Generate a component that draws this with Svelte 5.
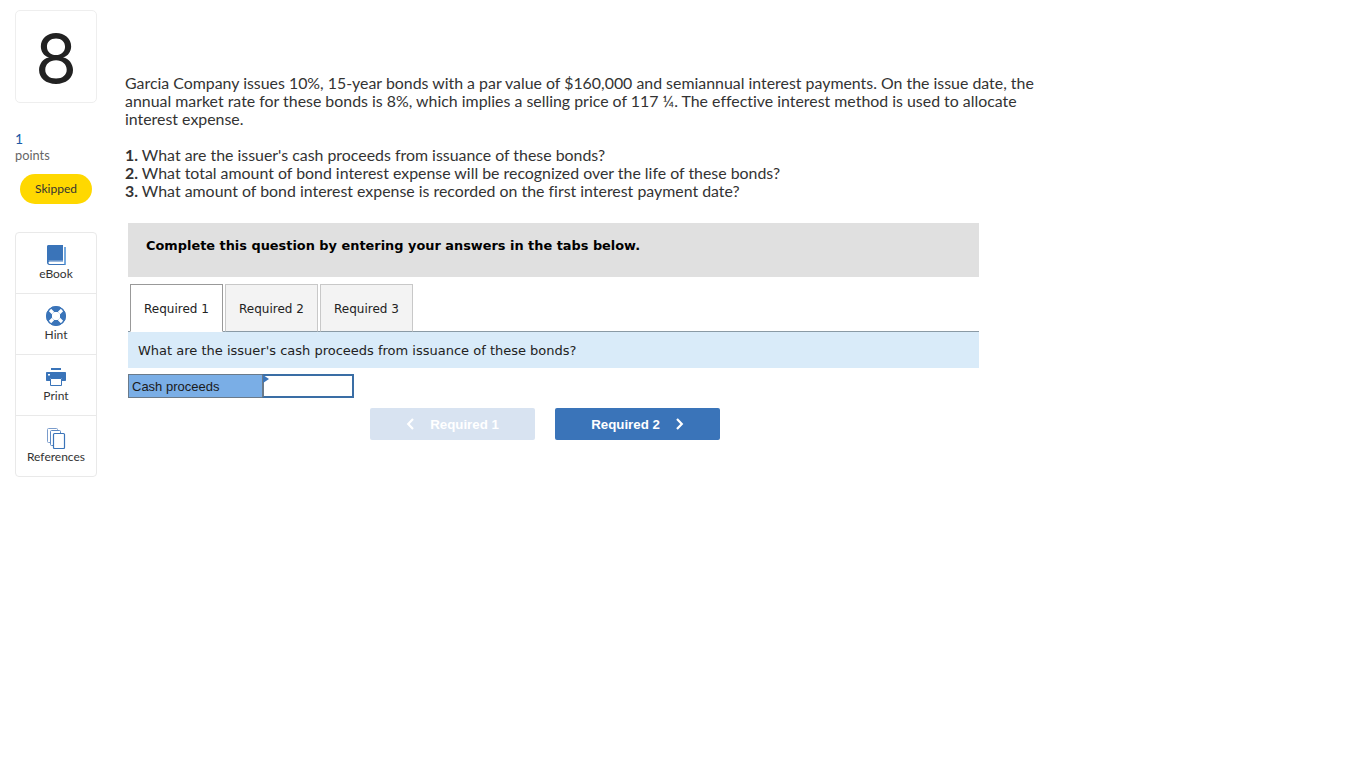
<script>
  const tools = ['eBook', 'Hint', 'Print', 'References'];
  const tabs = ['Required 1', 'Required 2', 'Required 3'];
</script>

<div class="page">
  <aside class="side">
    <div class="number">8</div>
    <div class="points">
      <span class="value">1</span>
      <span class="label">points</span>
    </div>
    <div class="status">Skipped</div>
    <ul class="tools">
      {#each tools as tool}
        <li>
          <svg width="22" height="22" viewBox="0 0 22 22">
            {#if tool === 'eBook'}
              <path d="M2 2.500C2 1.500 2.700 1 3.500 1H18v15.500H4.500c-1.500 0-2.500 1-2.500 2.500z" fill="#3a74b9" />
              <path d="M2 16.500h16v1H5c-1 0-1.500.6-1.500 1.200S4 20 5 20h14.500V3h1v18H4.500C3 21 2 20 2 18.500z" fill="#3a74b9" />
              <path d="M19.500 3h1v18h-1z" fill="#4f9ae0" />
            {:else if tool === 'Hint'}
              <circle cx="11" cy="11" r="7" fill="none" stroke="#3a74b9" stroke-width="6" />
              <path d="M5 5l3 3M17 5l-3 3M5 17l3-3M17 17l-3-3" stroke="#fff" stroke-width="3.200" />
              <circle cx="11" cy="11" r="4" fill="#fff" />
              <circle cx="11" cy="11" r="9.500" fill="none" stroke="#3a74b9" stroke-width="1" />
            {:else if tool === 'Print'}
              <path d="M6 2h10v2H6z" fill="#3a74b9" />
              <path d="M2 6h18c.6 0 1 .4 1 1v7c0 .6-.4 1-1 1h-3v-3H5v3H2c-.6 0-1-.4-1-1V7c0-.6.4-1 1-1z" fill="#3a74b9" />
              <path d="M3 8h2v1.500H3z" fill="#fff" />
              <path d="M5.500 12.500h11v7h-11z" fill="#fff" stroke="#3a74b9" />
            {:else}
              <rect x="2.500" y="1.500" width="10" height="14" rx="1" fill="#fff" stroke="#7a9ccc" />
              <rect x="5.500" y="3.500" width="10" height="15" rx="1" fill="#fff" stroke="#5b88c2" />
              <rect x="8.500" y="6.500" width="11" height="15" rx="1" fill="#fff" stroke="#3a74b9" stroke-width="1.200" />
            {/if}
          </svg>
          <span>{tool}</span>
        </li>
      {/each}
    </ul>
  </aside>

  <main class="content">
    <div class="question">
      <p>
        Garcia Company issues 10%, 15-year bonds with a par value of $160,000 and semiannual interest payments. On the issue date, the
        annual market rate for these bonds is 8%, which implies a selling price of 117 ¼. The effective interest method is used to allocate
        interest expense.
      </p>
      <p class="asks">
        <b>1.</b> What are the issuer's cash proceeds from issuance of these bonds?<br />
        <b>2.</b> What total amount of bond interest expense will be recognized over the life of these bonds?<br />
        <b>3.</b> What amount of bond interest expense is recorded on the first interest payment date?
      </p>
    </div>

    <section class="worksheet">
      <div class="banner">Complete this question by entering your answers in the tabs below.</div>
      <div class="tabs">
        {#each tabs as tab, i}
          <button class="tab" class:active={i === 0}>{tab}</button>
        {/each}
      </div>
      <div class="prompt">What are the issuer's cash proceeds from issuance of these bonds?</div>
      <div class="entry">
        <div class="entry-label">Cash proceeds</div>
        <div class="entry-input"></div>
      </div>
      <div class="nav">
        <button class="nav-btn disabled">
          <svg width="9" height="12" viewBox="0 0 9 12"><path d="M7 1L2.200 6 7 11" fill="none" stroke="#fff" stroke-width="2.200" /></svg>
          Required 1
        </button>
        <button class="nav-btn">
          Required 2
          <svg width="9" height="12" viewBox="0 0 9 12"><path d="M2 1L6.800 6 2 11" fill="none" stroke="#fff" stroke-width="2.200" /></svg>
        </button>
      </div>
    </section>
  </main>
</div>

<style>
  :global(body) {
    margin: 0;
    background: #fff;
  }

  .page {
    display: flex;
    align-items: flex-start;
    font-family: Lato, "Open Sans", sans-serif;
    font-variant-ligatures: none;
    color: #333;
  }

  .side {
    width: 82px;
    margin: 10px 0 0 15px;
    display: flex;
    flex-direction: column;
  }

  .number {
    height: 93px;
    border: 1px solid #eee;
    border-radius: 5px;
    box-sizing: border-box;
    text-align: center;
    font-size: 68px;
    line-height: 94px;
    font-family: Inter, Lato, sans-serif;
    font-weight: 400;
    color: #222;
  }

  .points {
    margin-top: 28px;
    display: flex;
    flex-direction: column;
    font-size: 12.800px;
    line-height: 16px;
  }
  .value {
    color: #1c5aa6;
    font-size: 14px;
  }
  .label {
    color: #666;
  }

  .status {
    margin: 11px 0 0 5px;
    width: 72px;
    height: 30px;
    border-radius: 15px;
    background: #ffd800;
    text-align: center;
    font-size: 12px;
    line-height: 30px;
  }

  .tools {
    list-style: none;
    margin: 28px 0 0;
    padding: 0;
    border: 1px solid #e9e9e9;
    border-radius: 4px;
  }
  .tools li {
    height: 60px;
    border-bottom: 1px solid #e9e9e9;
    display: flex;
    flex-direction: column;
    align-items: center;
    font-size: 12px;
    color: #333;
  }
  .tools li:last-child {
    border-bottom: 0;
  }
  .tools svg {
    margin-top: 11px;
  }
  .tools span {
    line-height: 14px;
    margin-top: 1px;
  }

  .content {
    margin-left: 28px;
    flex: none;
    width: 920px;
  }

  .question {
    margin-top: 74px;
    font-size: 15.900px;
    line-height: 18px;
    width: 930px;
  }
  .question p {
    margin: 0;
  }
  .question .asks {
    margin-top: 18px;
  }

  .worksheet {
    margin: 23px 0 0 3px;
    width: 851px;
    font-family: "DejaVu Sans", Verdana, sans-serif;
  }

  .banner {
    height: 54px;
    box-sizing: border-box;
    background: #e0e0e0;
    padding: 14px 18px;
    font-size: 12.900px;
    line-height: 17px;
    font-weight: bold;
    color: #000;
  }

  .tabs {
    margin-top: 7px;
    padding-left: 2px;
    display: flex;
    gap: 2px;
    height: 47px;
    border-bottom: 1px solid #8a9aa5;
  }
  .tab {
    width: 93px;
    height: 48px;
    padding: 2px 0 0;
    border: 1px solid #c8c8c8;
    border-bottom-color: #8a9aa5;
    background: #f3f3f3;
    font-family: inherit;
    font-size: 12px;
    color: #222;
  }
  .tab.active {
    background: #fff;
    border-color: #999;
    border-bottom-color: #fff;
  }

  .prompt {
    height: 36px;
    background: #d9ebf9;
    padding-left: 10px;
    font-size: 13px;
    line-height: 37px;
    color: #222;
  }

  .entry {
    margin-top: 6px;
    display: flex;
    height: 24px;
    font-family: "Liberation Sans", Arial, sans-serif;
    font-size: 13px;
  }
  .entry-label {
    width: 134px;
    box-sizing: border-box;
    background: #7aaee6;
    border: 1px solid #6a7a8a;
    border-right: 0;
    padding-left: 3px;
    line-height: 23px;
    color: #1a1a1a;
  }
  .entry-input {
    width: 92px;
    box-sizing: border-box;
    background: #fff;
    border: 2px solid #3a6ea5;
    border-left-color: #6a7a8a;
    position: relative;
  }
  .entry-input::before {
    content: "";
    position: absolute;
    left: -1px;
    top: -1px;
    border-left: 6px solid #3a74b9;
    border-top: 4px solid transparent;
    border-bottom: 4px solid transparent;
  }

  .nav {
    margin: 10px 0 0 242px;
    display: flex;
    gap: 20px;
  }
  .nav-btn {
    width: 165px;
    height: 32px;
    border: 0;
    border-radius: 2px;
    background: #3a74b9;
    color: #fff;
    font-family: "Liberation Sans", Arial, sans-serif;
    font-weight: bold;
    font-size: 13.300px;
    display: flex;
    align-items: center;
    justify-content: center;
    gap: 15px;
    padding: 0;
  }
  .nav-btn.disabled {
    background: #d8e3f1;
  }
</style>
